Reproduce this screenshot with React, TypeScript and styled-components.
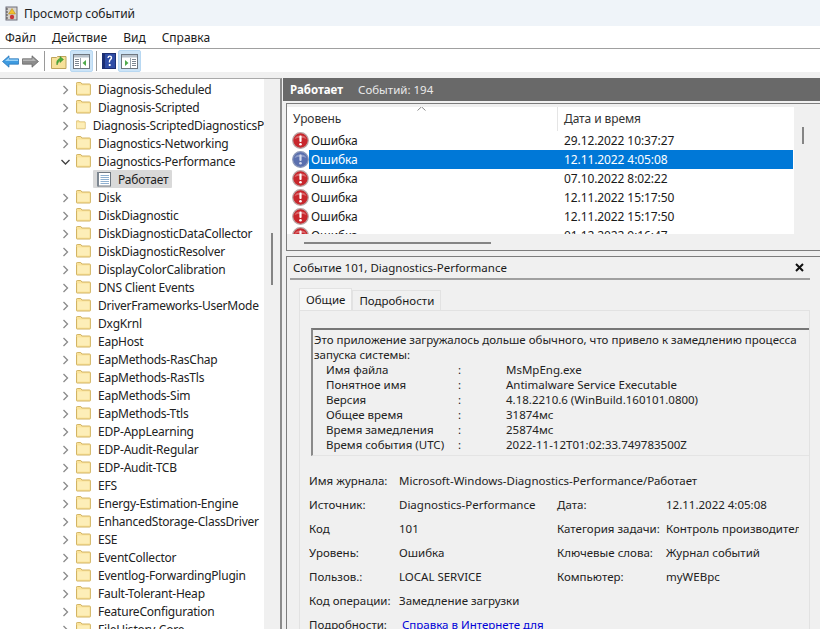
import React from "react";
import styled, { createGlobalStyle } from "styled-components";

const Global = createGlobalStyle`
  html, body { margin: 0; padding: 0; background: #f0f0f0; overflow: hidden; }
  * { box-sizing: border-box; }
`;

const Window = styled.div`
  width: 820px;
  height: 629px;
  overflow: hidden;
  display: flex;
  flex-direction: column;
  font-family: "Noto Sans", "Liberation Sans", sans-serif;
  font-size: 11.5px;
  color: #1a1a1a;
  background: #f0f0f0;
`;
const TitleBar = styled.div`
  height: 26px;
  flex: none;
  background: #eff4f9;
  display: flex;
  align-items: center;
  gap: 6px;
  padding-left: 5px;
  font-size: 12px;
  color: #222;
`;
const MenuBar = styled.div`
  height: 23px;
  flex: none;
  background: #fff;
  border-bottom: 1px solid #a0a0a0;
  display: flex;
  align-items: center;
  gap: 16px;
  padding-left: 5px;
  font-size: 12px;
`;
const Toolbar = styled.div`
  height: 23px;
  flex: none;
  background: #fff;
  display: flex;
  align-items: center;
  padding-top: 1px;
`;
const ToolIcon = styled.div<{ $w?: number; $on?: boolean }>`
  width: ${(p) => p.$w ?? 23}px;
  height: 22px;
  display: flex;
  align-items: center;
  justify-content: center;
  border-radius: 2px;
  background: ${(p) => (p.$on ? "#cce4f7" : "transparent")};
  border: 1px solid ${(p) => (p.$on ? "#b8d8f2" : "transparent")};
`;
const ToolSep = styled.div`
  width: 1px;
  height: 20px;
  background: #9a9a9a;
  margin: 0 3px;
`;
const Body = styled.div`
  flex: 1;
  min-height: 0;
  display: flex;
  padding-top: 6px;
  background: #f0f0f0;
`;
const TreePane = styled.div`
  width: 282px;
  flex: none;
  display: flex;
  background: #fff;
  border-top: 1px solid #a9a9a9;
  border-right: 2px solid #8c8c8c;
  overflow: hidden;
`;
const TreeList = styled.div`
  width: 264px;
  flex: none;
  padding-top: 1px;
  overflow: hidden;
`;
const TreeRow = styled.div`
  height: 18px;
  display: flex;
  align-items: center;
  padding-left: 61px;
  white-space: nowrap;
  overflow: hidden;
  font-size: 12px;
  letter-spacing: -0.22px;
  color: #222;
`;
const Chevron = styled.svg`
  width: 9px;
  height: 10px;
  flex: none;
  margin-right: 6px;
  margin-top: 1px;
`;
const TreeLabel = styled.span`
  margin-left: 7px;
`;
const LeafRow = styled(TreeRow)`
  padding-left: 93px;
`;
const LeafPill = styled.div`
  display: flex;
  align-items: center;
  height: 18px;
  padding: 0 4px 0 3px;
  gap: 6px;
  background: #d9d9d9;
  border-radius: 1px;
`;
const TreeScroll = styled.div`
  flex: 1;
  background: #f0f0f0;
  display: flex;
  justify-content: center;
  padding-top: 154px;
`;
const ScrollThumbV = styled.div<{ $h: number }>`
  width: 2px;
  height: ${(p) => p.$h}px;
  background: #858585;
`;
const RightCol = styled.div`
  flex: 1;
  min-width: 0;
  margin-left: 1px;
  display: flex;
  flex-direction: column;
`;
const ViewHeader = styled.div`
  height: 23px;
  flex: none;
  background: #696969;
  color: #eaeaea;
  display: flex;
  align-items: center;
  gap: 15px;
  padding-left: 7px;
  font-size: 11.5px;
  b { color: #fff; font-weight: 700; }
`;
const ListFrame = styled.div`
  margin-top: 2px;
  margin-left: 3px;
  height: 148px;
  flex: none;
  border: 1px solid #7d7d7d;
  border-right: none;
  padding: 3px 0 0 0;
  display: flex;
  background: #f0f0f0;
`;
const ListMain = styled.div`
  width: 507px;
  flex: none;
  display: flex;
  flex-direction: column;
`;
const ListView = styled.div`
  height: 127px;
  flex: none;
  background: #fff;
  overflow: hidden;
`;
const ListHead = styled.div`
  height: 24px;
  display: grid;
  grid-template-columns: 270px 1fr;
  align-items: center;
  position: relative;
  font-size: 12px;
  letter-spacing: -0.1px;
  color: #333;
`;
const HeadCell = styled.div<{ $div?: boolean }>`
  padding-left: 6px;
  height: 24px;
  line-height: 24px;
  border-left: ${(p) => (p.$div ? "1px solid #e5e5e5" : "none")};
`;
const SortMark = styled.svg`
  position: absolute;
  left: 130px;
  top: -1px;
`;
const ListRow = styled.div`
  height: 19px;
  display: grid;
  grid-template-columns: 270px 1fr;
  align-items: center;
  font-size: 12px;
  letter-spacing: -0.1px;
`;
const LevelCell = styled.div`
  display: flex;
  align-items: center;
  padding-left: 5px;
  height: 19px;
`;
const LevelText = styled.div<{ $sel?: boolean }>`
  flex: 1;
  margin-left: 0;
  padding-left: 2px;
  height: 19px;
  line-height: 19px;
  background: ${(p) => (p.$sel ? "#0078d7" : "transparent")};
  color: ${(p) => (p.$sel ? "#fff" : "#1a1a1a")};
`;
const DateCell = styled.div<{ $sel?: boolean }>`
  padding-left: 7px;
  height: 19px;
  line-height: 19px;
  background: ${(p) => (p.$sel ? "#0078d7" : "transparent")};
  color: ${(p) => (p.$sel ? "#fff" : "#1a1a1a")};
  margin-right: 1px;
`;
const HScroll = styled.div`
  flex: 1;
  padding: 8px 0 0 17px;
`;
const ScrollThumbH = styled.div`
  width: 187px;
  height: 2px;
  background: #858585;
`;
const VScroll = styled.div`
  flex: 1;
  padding: 20px 0 0 8px;
`;
const Detail = styled.div`
  margin-top: 5px;
  margin-left: 3px;
  flex: 1;
  min-height: 0;
  border-top: 1px solid #7d7d7d;
  border-left: 1px solid #7d7d7d;
  padding: 0 10px 0 3px;
  overflow: hidden;
`;
const DetailTitle = styled.div`
  height: 23px;
  display: flex;
  align-items: center;
  justify-content: space-between;
  border-bottom: 2px solid #a0a0a0;
  padding: 0 6px 0 3px;
  font-size: 11.5px;
  margin-right: 0;
`;
const CloseX = styled.svg`
  margin-right: 0;
`;
const Tabs = styled.div`
  display: flex;
  padding: 8px 0 0 9px;
  height: 30px;
  align-items: flex-end;
`;
const Tab = styled.div<{ $active?: boolean }>`
  height: ${(p) => (p.$active ? 22 : 20)}px;
  padding: 0 6px;
  display: flex;
  align-items: center;
  background: ${(p) => (p.$active ? "#f7f7f7" : "#f0f0f0")};
  border: 1px solid #e2e2e2;
  border-bottom: none;
  font-size: 11.5px;
  ${(p) => (p.$active ? "padding: 0 6px; margin-right: 0; position: relative;" : "")}
`;
const TabPanel = styled.div`
  margin-left: 9px;
  height: 330px;
  border: 1px solid #e2e2e2;
  padding: 17px 0 0 11px;
  overflow: hidden;
`;
const Message = styled.div`
  height: 128px;
  border-top: 2px solid #777;
  border-left: 2px solid #8a8a8a;
  border-bottom: 1px solid #e4e4e4;
  padding: 2px 0 0 1px;
  font-size: 11.5px;
  line-height: 15px;
  white-space: nowrap;
  overflow: hidden;
  color: #222;
`;
const MsgRow = styled.div`
  display: grid;
  grid-template-columns: 132px 48px 1fr;
  padding-left: 12px;
  height: 15px;
`;
const Fields = styled.div`
  margin-top: 12px;
  margin-left: -2px;
  display: grid;
  grid-template-columns: 90px 158px 109px 133px;
  grid-auto-rows: 24px;
  align-items: center;
  white-space: nowrap;
  overflow: hidden;
  font-size: 11.5px;
  color: #222;
`;
const Wide = styled.div`
  grid-column: 2 / 5;
`;
const Clip = styled.div`
  overflow: hidden;
`;
const Link = styled.a`
  color: #0000d8;
  text-decoration: underline;
  margin-left: 3px;
`;

const tree: [string, string?][] = [
  ["Diagnosis-Scheduled"], ["Diagnosis-Scripted"], ["Diagnosis-ScriptedDiagnosticsP"], ["Diagnostics-Networking"],
  ["Diagnostics-Performance", "open"], ["Работает", "leaf"], ["Disk"], ["DiskDiagnostic"], ["DiskDiagnosticDataCollector"],
  ["DiskDiagnosticResolver"], ["DisplayColorCalibration"], ["DNS Client Events"], ["DriverFrameworks-UserMode"], ["DxgKrnl"],
  ["EapHost"], ["EapMethods-RasChap"], ["EapMethods-RasTls"], ["EapMethods-Sim"], ["EapMethods-Ttls"], ["EDP-AppLearning"],
  ["EDP-Audit-Regular"], ["EDP-Audit-TCB"], ["EFS"], ["Energy-Estimation-Engine"], ["EnhancedStorage-ClassDriver"], ["ESE"],
  ["EventCollector"], ["Eventlog-ForwardingPlugin"], ["Fault-Tolerant-Heap"], ["FeatureConfiguration"], ["FileHistory-Core"],
];

const events = [
  ["29.12.2022 10:37:27"], ["12.11.2022 4:05:08", "sel"], ["07.10.2022 8:02:22"],
  ["12.11.2022 15:17:50"], ["12.11.2022 15:17:50"], ["01.12.2022 9:16:47"],
];

const msgRows = [
  ["Имя файла", "MsMpEng.exe"], ["Понятное имя", "Antimalware Service Executable"],
  ["Версия", "4.18.2210.6 (WinBuild.160101.0800)"], ["Общее время", "31874мс"],
  ["Время замедления", "25874мс"], ["Время события (UTC)", "2022-11-12T01:02:33.749783500Z"],
];

const Folder = () => (
  <svg width="15" height="14" viewBox="0 0 15 14">
    <path d="M.5 2.5V1.2q0-.7.7-.7h3.6l1 1.5h7.7q.9 0 .9.9v9.6q0 .5-.6.5H1q-.5 0-.5-.5z" fill="#fbe39a" stroke="#d2b464" />
    <path d="M1.5 3.5h12v8h-12z" fill="#fdeeb8" />
  </svg>
);

const LogIcon = () => (
  <svg width="16" height="16" viewBox="0 0 16 16">
    <rect x="2.5" y="1.5" width="12" height="13.5" fill="#fff" stroke="#6f7780" />
    <rect x="1" y="1" width="2" height="14.5" fill="#7d8791" />
    {[4, 6, 8, 10, 12].map((y) => (
      <rect key={y} x="4.5" y={y} width="8.5" height="1" fill="#8fb0d0" />
    ))}
  </svg>
);

const ErrorIcon = ({ sel }: { sel?: boolean }) => (
  <svg width="17" height="17" viewBox="0 0 17 17">
    <circle cx="8.5" cy="8.5" r="7.8" fill={sel ? "#5a6fae" : "#c8262c"} stroke={sel ? "#8b97b8" : "#b9a6a6"} strokeWidth="1.2" />
    <path d="M2.5 7a6.3 5 0 0 1 12 0q-6-2.5-12 0z" fill="#fff" opacity=".3" />
    <rect x="7.4" y="3.4" width="2.2" height="6.6" rx="1" fill={sel ? "#d4d9ec" : "#fff"} />
    <circle cx="8.5" cy="12.3" r="1.3" fill={sel ? "#d4d9ec" : "#fff"} />
  </svg>
);

export default function App() {
  return (
    <Window>
      <Global />
      <TitleBar>
        <svg width="13" height="15" viewBox="0 0 13 15">
          <rect x="1" y="1" width="11" height="13" fill="#d7d3cc" stroke="#6f6f7c" />
          <path d="M1 3h2M1 6h2M1 9h2M1 12h2" stroke="#444" />
          <path d="M7 2.5 10.5 8h-7z" fill="#f3c12d" stroke="#a5801a" strokeWidth=".5" />
          <circle cx="7" cy="11" r="2.2" fill="#c9363a" />
        </svg>
        <span>Просмотр событий</span>
      </TitleBar>
      <MenuBar>
        <span>Файл</span>
        <span>Действие</span>
        <span>Вид</span>
        <span>Справка</span>
      </MenuBar>
      <Toolbar>
        <ToolIcon $w={20}>
          <svg width="17" height="13" viewBox="0 0 17 13">
            <path d="M.5 6.5 7 .8v3h9.5v5.4H7v3z" fill="#3f9be0" stroke="#1f6fb5" strokeWidth=".7" />
            <path d="M3 6 7 2.5v2h9v1.5H4z" fill="#9ad2f7" />
          </svg>
        </ToolIcon>
        <ToolIcon $w={21}>
          <svg width="17" height="13" viewBox="0 0 17 13">
            <path d="M16.5 6.5 10 .8v3H.5v5.4H10v3z" fill="#8d8d8d" stroke="#5f5f5f" strokeWidth=".7" />
            <path d="M1 4.5h9.5V2.5L14 6H1z" fill="#b5b5b5" />
          </svg>
        </ToolIcon>
        <ToolSep />
        <ToolIcon $w={22}>
          <svg width="16" height="15" viewBox="0 0 16 15">
            <path d="M.5 3.5h5l1-1h8.5v12H.5z" fill="#f7e19a" stroke="#bfa45c" />
            <path d="M6 11C5 7 7 5 9 4.5V2.5l3.5 3L9 8.5V6.5C8 7 7 8.5 6 11z" fill="#4eae3c" stroke="#2e8427" strokeWidth=".5" />
          </svg>
        </ToolIcon>
        <ToolIcon $w={23} $on>
          <svg width="17" height="15" viewBox="0 0 17 15">
            <rect x=".5" y=".5" width="16" height="14" fill="#fff" stroke="#6f7780" />
            <rect x="1" y="1" width="15" height="2.5" fill="#b8c2cc" />
            <path d="M2 5h4v1H2zM2 7h4v1H2zM2 9h4v1H2zM2 11h4v1H2z" fill="#7d8791" />
            <path d="M7.5 4v10" stroke="#9aa4ad" />
            <path d="M13 6v6l-3.5-3z" fill="#4ea94a" />
          </svg>
        </ToolIcon>
        <ToolSep />
        <ToolIcon $w={18}>
          <svg width="14" height="16" viewBox="0 0 14 16">
            <rect x=".5" y=".5" width="13" height="15" fill="#2f4da6" stroke="#1c2f73" />
            <rect x="1" y="1" width="2" height="14" fill="#1c2f73" />
            <path d="M5.3 5q.2-2.4 2.5-2.4 2.4 0 2.4 2.2 0 1.3-1.2 2.1-.9.6-.9 1.9v.6H6.8v-1q0-1.5 1.1-2.4.8-.6.8-1.3 0-.9-.9-.9-1 0-1.1 1.1zM6.8 11h1.8v1.9H6.8z" fill="#fff" />
          </svg>
        </ToolIcon>
        <ToolIcon $w={23} $on>
          <svg width="17" height="15" viewBox="0 0 17 15">
            <rect x=".5" y=".5" width="16" height="14" fill="#fff" stroke="#6f7780" />
            <rect x="1" y="1" width="15" height="2.5" fill="#b8c2cc" />
            <path d="M11 5h4v1h-4zM11 7h4v1h-4zM11 9h4v1h-4zM11 11h4v1h-4z" fill="#7d8791" />
            <path d="M9.5 4v10" stroke="#9aa4ad" />
            <path d="M4 6v6l3.5-3z" fill="#4ea94a" />
          </svg>
        </ToolIcon>
      </Toolbar>
      <Body>
        <TreePane>
          <TreeList>
            {tree.map(([name, kind]) =>
              kind === "leaf" ? (
                <LeafRow key={name}>
                  <LeafPill>
                    <LogIcon />
                    <span>{name}</span>
                  </LeafPill>
                </LeafRow>
              ) : (
                <TreeRow key={name}>
                  <Chevron viewBox="0 0 9 10">
                    {kind === "open" ? (
                      <path d="M.5 3 4.5 7l4-4" fill="none" stroke="#404040" strokeWidth="1.3" />
                    ) : (
                      <path d="M2.5 1 6.5 5l-4 4" fill="none" stroke="#8a8a8a" strokeWidth="1.3" />
                    )}
                  </Chevron>
                  <Folder />
                  <TreeLabel>{name}</TreeLabel>
                </TreeRow>
              )
            )}
          </TreeList>
          <TreeScroll>
            <ScrollThumbV $h={52} />
          </TreeScroll>
        </TreePane>
        <RightCol>
          <ViewHeader>
            <b>Работает</b>
            <span>Событий: 194</span>
          </ViewHeader>
          <ListFrame>
            <ListMain>
              <ListView>
                <ListHead>
                  <SortMark width="9" height="5" viewBox="0 0 9 5">
                    <path d="M.5 4.5 4.5.8l4 3.7" fill="none" stroke="#8a8a8a" />
                  </SortMark>
                  <HeadCell>Уровень</HeadCell>
                  <HeadCell $div>Дата и время</HeadCell>
                </ListHead>
                {events.map(([d, sel]) => (
                  <ListRow key={d + sel}>
                    <LevelCell>
                      <ErrorIcon sel={!!sel} />
                      <LevelText $sel={!!sel}>Ошибка</LevelText>
                    </LevelCell>
                    <DateCell $sel={!!sel}>{d}</DateCell>
                  </ListRow>
                ))}
              </ListView>
              <HScroll>
                <ScrollThumbH />
              </HScroll>
            </ListMain>
            <VScroll>
              <ScrollThumbV $h={17} />
            </VScroll>
          </ListFrame>
          <Detail>
            <DetailTitle>
              <span>Событие 101, Diagnostics-Performance</span>
              <CloseX width="9" height="9" viewBox="0 0 9 9">
                <path d="M1 1l7 7M8 1 1 8" stroke="#111" strokeWidth="2" />
              </CloseX>
            </DetailTitle>
            <Tabs>
              <Tab $active>Общие</Tab>
              <Tab>Подробности</Tab>
            </Tabs>
            <TabPanel>
              <Message>
                <div>Это приложение загружалось дольше обычного, что привело к замедлению процесса</div>
                <div>запуска системы:</div>
                {msgRows.map(([k, v]) => (
                  <MsgRow key={k}>
                    <span>{k}</span>
                    <span>:</span>
                    <span>{v}</span>
                  </MsgRow>
                ))}
              </Message>
              <Fields>
                <div>Имя журнала:</div>
                <Wide>Microsoft-Windows-Diagnostics-Performance/Работает</Wide>
                <div>Источник:</div>
                <div>Diagnostics-Performance</div>
                <div>Дата:</div>
                <div>12.11.2022 4:05:08</div>
                <div>Код</div>
                <div>101</div>
                <div>Категория задачи:</div>
                <Clip>Контроль производительности</Clip>
                <div>Уровень:</div>
                <div>Ошибка</div>
                <div>Ключевые слова:</div>
                <div>Журнал событий</div>
                <div>Пользов.:</div>
                <div>LOCAL SERVICE</div>
                <div>Компьютер:</div>
                <div>myWEBpc</div>
                <div>Код операции:</div>
                <Wide>Замедление загрузки</Wide>
                <div>Подробности:</div>
                <Wide>
                  <Link>Справка в Интернете для</Link>
                </Wide>
              </Fields>
            </TabPanel>
          </Detail>
        </RightCol>
      </Body>
    </Window>
  );
}
